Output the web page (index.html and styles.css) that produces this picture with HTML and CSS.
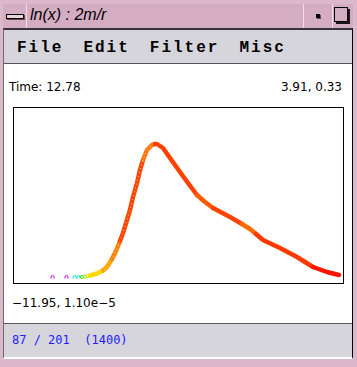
FILE: index.html
```html
<!DOCTYPE html>
<html lang="en">
<head>
    <meta charset="UTF-8">
    <title>ln(x) : 2m/r</title>
    <link rel="stylesheet" href="styles.css">
</head>
<body>

    <div class="frame">
        <!-- Barra de titulo -->
        <div class="titlebar">
            <div class="tb-btn menu-btn"><span class="bar"></span></div>
            <div class="title">ln(x) : 2m/r</div>
            <div class="tb-btn min-btn"><span class="dot"></span></div>
            <div class="tb-btn max-btn"><span class="box"></span></div>
        </div>

        <div class="client">
            <div class="menubar">
                <span>File</span>
                <span>Edit</span>
                <span>Filter</span>
                <span>Misc</span>
            </div>

            <div class="content">
                <div class="info-row">
                    <span>Time: 12.78</span>
                    <span>3.91, 0.33</span>
                </div>

                <!-- Grafica -->
                <div class="plot">
                    <svg width="329" height="175" viewBox="14 108 329 175">
                        <g fill="none" stroke-width="1">
                            <path d="M51 278.5v-1.5a1.5 1.5 0 0 1 3 0v1.5" stroke="#e000e0"/>
                            <path d="M65 278.5v-1.5a1.5 1.5 0 0 1 3 0v1.5" stroke="#c000ff"/>
                            <path d="M73 278.5v-1.5a1.5 1.5 0 0 1 3 0v1.5" stroke="#00e0e0"/>
                            <path d="M77 278.5v-1.5a1.5 1.5 0 0 1 3 0v1.5" stroke="#00f0b0"/>
                            <circle cx="82" cy="277" r="1.6" stroke="#40f000"/>
                            <circle cx="85" cy="276.5" r="1.6" stroke="#90f000"/>
                            <circle cx="88" cy="276" r="1.6" stroke="#c8f000"/>
                        </g>
                        <g fill="none" stroke-width="4.5" stroke-linejoin="round" stroke-linecap="round">
                            <polyline points="90,275.5 97,273.5 103,270.5" stroke="#ffd800"/>
                            <polyline points="103,270.5 107,267 112,259" stroke="#ffa400"/>
                            <polyline points="112,259 116,251 120,241" stroke="#ff8000"/>
                            <polyline points="120,241 123,233 127,220 130,210 133,197 137,183 140,170 143,160" stroke="#ff4400"/>
                            <polyline points="143,160 147,150 152,145 155,144" stroke="#ff7810"/>
                            <polyline points="155,144 157,144 163,148 170,158 180,172 188,183 197,195" stroke="#ff4000"/>
                            <polyline points="197,195 205,202 213,208" stroke="#ff5a00"/>
                            <polyline points="213,208 230,217 242,224" stroke="#ff4400"/>
                            <polyline points="242,224 250,229 256,234" stroke="#ff6a00"/>
                            <polyline points="256,234 263,240 280,248 297,257 313,267" stroke="#ff3800"/>
                            <polyline points="313,267 327,272 339,275" stroke="#ff1400"/>
                        </g>
                        <g fill="none" stroke="#fff" stroke-width="1" stroke-dasharray="1 3" opacity="0.7">
                            <polyline points="97,273.5 103,270.5 107,267 112,259 116,251 120,241 123,233 127,220 130,210 133,197 137,183 140,170 143,160 147,150 152,145"/>
                        </g>
                    </svg>
                </div>

                <div class="coords">&minus;11.95, 1.10e&minus;5</div>
            </div>

            <div class="status">87 / 201  (1400)</div>
        </div>
    </div>

</body>
</html>
```

FILE: styles.css
```css
/* Ventana general */
body {
    margin: 0;
    background-color: #dcb8cb;
    font-family: 'DejaVu Sans', sans-serif;
    color: #000;
}

.frame {
    width: 357px;
    height: 367px;
    box-sizing: border-box;
    padding: 4px 4px 0 3px;
}

/* Barra de titulo */
.titlebar {
    display: flex;
    height: 24px;
    background-color: #d5adc2;
}

.tb-btn {
    display: flex;
    justify-content: center;
    align-items: center;
    box-sizing: border-box;
}

.menu-btn {
    width: 24px;
    border-right: 1px solid #f2dde8;
}

.menu-btn .bar {
    width: 16px;
    height: 3px;
    border: 1px solid #000;
    background-color: #ecd2df;
    box-shadow: 1px 1px 0 #5c4a55;
}

.title {
    flex: 1;
    padding-left: 3px;
    font-family: 'Liberation Sans', sans-serif;
    font-style: italic;
    font-size: 16px;
    line-height: 22px;
}

.min-btn {
    width: 30px;
    border-left: 1px solid #f2dde8;
    border-right: 1px solid #f2dde8;
}

.min-btn .dot {
    width: 4px;
    height: 4px;
    background-color: #000;
    box-shadow: 1px 1px 0 #5c4a55;
}

.max-btn {
    width: 20px;
    align-items: flex-start;
    justify-content: flex-start;
    padding: 3px 0 0 1px;
}

.max-btn .box {
    width: 12px;
    height: 13px;
    border: 1px solid #000;
    box-shadow: 2px 2px 0 #1a1418;
}

/* Area de la aplicacion */
.client {
    border-top: 2px solid #3c3038;
    border-left: 1px solid #6b6b70;
    border-right: 1px solid #000;
    border-bottom: 2px solid #fff;
}

.menubar {
    display: flex;
    gap: 20px;
    height: 29px;
    padding: 4px 0 0 13px;
    border-bottom: 1px solid #55555a;
    background-color: #d7d5dc;
    font-family: 'Liberation Mono', monospace;
    font-weight: bold;
    font-size: 16px;
    letter-spacing: 2px;
    line-height: 29px;
}

.content {
    height: 259px;
    background-color: #fff;
    font-size: 12px;
    line-height: 14px;
    overflow: hidden;
}

.info-row {
    display: flex;
    justify-content: space-between;
    margin-top: 16px;
    padding: 0 10px 0 5px;
}

.plot {
    height: 175px;
    margin: 13px 8px 0 9px;
    border: 1px solid #000;
}

.plot svg {
    display: block;
}

.coords {
    margin-top: 12px;
    padding-left: 8px;
}

/* Barra de estado */
.status {
    height: 24px;
    padding: 9px 0 0 8px;
    border-top: 1px solid #5a5a5a;
    background-color: #d7d5dc;
    color: #2020ff;
    font-family: 'DejaVu Sans Mono', monospace;
    font-size: 12px;
    line-height: 14px;
    white-space: pre;
}
```
